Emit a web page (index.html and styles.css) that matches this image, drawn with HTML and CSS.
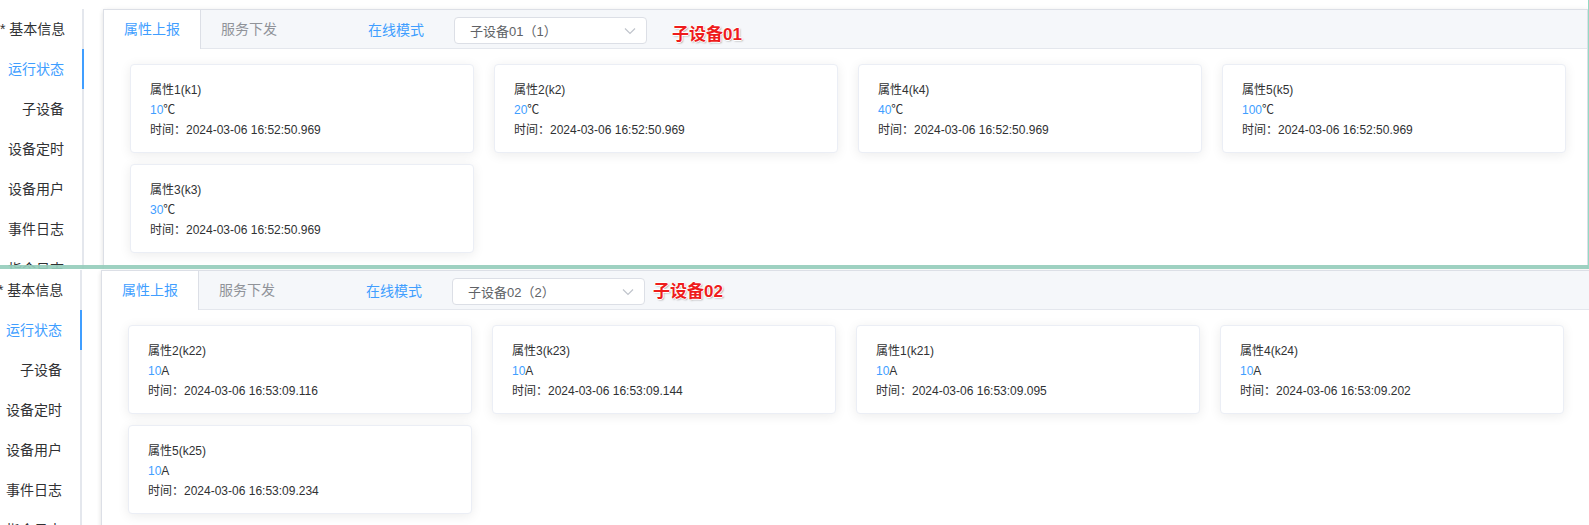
FILE: index.html
```html
<!DOCTYPE html>
<html lang="zh-CN">
<head>
<meta charset="utf-8">
<title>运行状态</title>
<link rel="stylesheet" href="styles.css">
</head>
<body>
<div class="stack">
  <section class="shot shot--first">
    <div class="shot__inner">
      <nav class="side">
        <div class="side__item">* 基本信息</div>
        <div class="side__item side__item--active">运行状态</div>
        <div class="side__item">子设备</div>
        <div class="side__item">设备定时</div>
        <div class="side__item">设备用户</div>
        <div class="side__item">事件日志</div>
        <div class="side__item">指令日志</div>
      </nav>
      <div class="panel">
        <div class="panel__head">
          <div class="tab tab--active">属性上报</div>
          <div class="tab">服务下发</div>
          <span class="mode">在线模式</span>
          <div class="select">
            <span class="select__text">子设备01（1）</span>
            <svg class="select__arrow" width="12" height="8" viewBox="0 0 12 8"><polyline points="1,1.5 6,6.5 11,1.5" fill="none" stroke="#c0c4cc" stroke-width="1.2"/></svg>
          </div>
          <span class="mark mark--first">子设备01</span>
        </div>
        <div class="panel__body">
          <div class="card"><div class="card__name">属性1(k1)</div><div><span class="card__val">10</span>℃</div><div>时间：2024-03-06 16:52:50.969</div></div>
          <div class="card"><div class="card__name">属性2(k2)</div><div><span class="card__val">20</span>℃</div><div>时间：2024-03-06 16:52:50.969</div></div>
          <div class="card"><div class="card__name">属性4(k4)</div><div><span class="card__val">40</span>℃</div><div>时间：2024-03-06 16:52:50.969</div></div>
          <div class="card"><div class="card__name">属性5(k5)</div><div><span class="card__val">100</span>℃</div><div>时间：2024-03-06 16:52:50.969</div></div>
          <div class="card"><div class="card__name">属性3(k3)</div><div><span class="card__val">30</span>℃</div><div>时间：2024-03-06 16:52:50.969</div></div>
        </div>
      </div>
    </div>
    <div class="band"></div>
  </section>

  <section class="shot shot--second">
    <div class="shot__inner">
      <nav class="side">
        <div class="side__item">* 基本信息</div>
        <div class="side__item side__item--active">运行状态</div>
        <div class="side__item">子设备</div>
        <div class="side__item">设备定时</div>
        <div class="side__item">设备用户</div>
        <div class="side__item">事件日志</div>
        <div class="side__item">指令日志</div>
      </nav>
      <div class="panel">
        <div class="panel__head">
          <div class="tab tab--active">属性上报</div>
          <div class="tab">服务下发</div>
          <span class="mode">在线模式</span>
          <div class="select">
            <span class="select__text">子设备02（2）</span>
            <svg class="select__arrow" width="12" height="8" viewBox="0 0 12 8"><polyline points="1,1.5 6,6.5 11,1.5" fill="none" stroke="#c0c4cc" stroke-width="1.2"/></svg>
          </div>
          <span class="mark mark--second">子设备02</span>
        </div>
        <div class="panel__body">
          <div class="card"><div class="card__name">属性2(k22)</div><div><span class="card__val">10</span>A</div><div>时间：2024-03-06 16:53:09.116</div></div>
          <div class="card"><div class="card__name">属性3(k23)</div><div><span class="card__val">10</span>A</div><div>时间：2024-03-06 16:53:09.144</div></div>
          <div class="card"><div class="card__name">属性1(k21)</div><div><span class="card__val">10</span>A</div><div>时间：2024-03-06 16:53:09.095</div></div>
          <div class="card"><div class="card__name">属性4(k24)</div><div><span class="card__val">10</span>A</div><div>时间：2024-03-06 16:53:09.202</div></div>
          <div class="card"><div class="card__name">属性5(k25)</div><div><span class="card__val">10</span>A</div><div>时间：2024-03-06 16:53:09.234</div></div>
        </div>
      </div>
    </div>
  </section>
</div>
</body>
</html>
```
FILE: styles.css
```css
* { box-sizing: border-box; }
html, body { margin: 0; padding: 0; background: #fff; }
body {
  font-family: "Liberation Sans", "Noto Sans CJK SC", sans-serif;
  color: #303133;
  width: 1589px;
  height: 525px;
  overflow: hidden;
}
.stack { display: flex; flex-direction: column; }

.shot { position: relative; overflow: hidden; }
.shot--first { height: 269px; border-right: 1px solid #93d9c3; }
.shot--second { height: 256px; }

.shot__inner { display: flex; align-items: stretch; padding-top: 9px; }
.shot--second .shot__inner { margin-top: -8px; margin-left: -2px; margin-right: -30px; }

.band {
  position: absolute;
  left: 0; right: 0; bottom: 0;
  height: 4px;
  background: rgba(150, 205, 188, 0.92);
}

/* sidebar */
.side {
  width: 84px;
  flex: none;
  border-right: 2px solid #e4e7ed;
  font-size: 14px;
}
.side__item {
  height: 40px;
  line-height: 40px;
  padding-right: 18px;
  text-align: right;
  white-space: nowrap;
  color: #303133;
  direction: rtl;
  unicode-bidi: plaintext;
}
.side__item--active {
  color: #409eff;
  margin-right: -2px;
  border-right: 2px solid #409eff;
  padding-right: 18px;
}

/* panel */
.panel {
  flex: 1;
  margin-left: 19px;
  min-height: 320px;
  border: 1px solid #dcdfe6;
  background: #fff;
  box-shadow: 0 2px 4px 0 rgba(0,0,0,.10), 0 0 6px 0 rgba(0,0,0,.04);
}
.panel__head {
  display: flex;
  align-items: center;
  height: 39px;
  background: #f5f7fa;
  border-bottom: 1px solid #e4e7ed;
  font-size: 14px;
}
.tab {
  align-self: flex-start;
  height: 39px;
  line-height: 38px;
  padding: 0 20px;
  color: #909399;
  white-space: nowrap;
}
.tab--active {
  background: #fff;
  color: #409eff;
  border-right: 1px solid #dcdfe6;
}
.mode {
  margin-left: 71px;
  color: #409eff;
  white-space: nowrap;
}
.select {
  margin-left: 30px;
  margin-top: 3px;
  width: 193px;
  height: 27px;
  border: 1px solid #dcdfe6;
  border-radius: 4px;
  background: #fff;
  display: flex;
  align-items: center;
  justify-content: space-between;
  padding: 0 10px 0 15px;
  font-size: 13px;
  color: #606266;
}
.select__text { white-space: nowrap; }
.select__arrow { display: block; }
.mark {
  font-size: 17px;
  font-weight: bold;
  line-height: 20px;
  color: #ee1c1c;
  white-space: nowrap;
  text-shadow: -1px 0 #fff, 1px 0 #fff, 0 -1px #fff, 0 1px #fff, 1px 1px 2px rgba(0,0,0,.45);
}
.mark--first { margin-left: 25px; margin-top: 11px; }
.mark--second { margin-left: 8px; margin-top: 3px; }

.panel__body {
  display: grid;
  grid-template-columns: repeat(4, 344px);
  column-gap: 20px;
  row-gap: 11px;
  padding: 15px 0 0 26px;
}
.card {
  height: 89px;
  border: 1px solid #ebeef5;
  border-radius: 4px;
  background: #fff;
  box-shadow: 0 2px 12px 0 rgba(0,0,0,.08);
  padding: 15px 19px 0;
  font-size: 12px;
  line-height: 20px;
  color: #303133;
}
.card__val { color: #409eff; }
```
